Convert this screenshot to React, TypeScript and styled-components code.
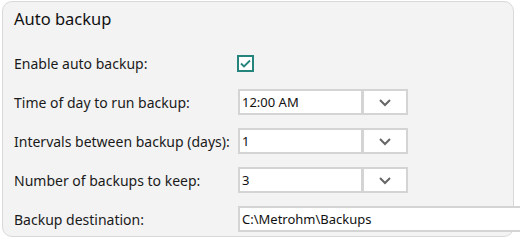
import React from "react";
import styled, { createGlobalStyle } from "styled-components";

const Global = createGlobalStyle`
  html, body { margin: 0; padding: 0; background: #ffffff; }
  body { font-family: "Noto Sans", "Open Sans", sans-serif; color: #1a1a1a; }
`;

const Card = styled.section`
  box-sizing: border-box;
  margin: 1px 0 0 2px;
  width: 512px;
  height: 236px;
  border: 1px solid #d9d9d9;
  border-radius: 10px;
  background: #f3f3f3;
  padding: 5px 0 0 11px;
`;

const Title = styled.h2`
  margin: 0;
  font-size: 16.5px;
  font-weight: 400;
  line-height: 24px;
  color: #111;
`;

const Form = styled.div`
  display: grid;
  grid-template-columns: 224px auto;
  grid-auto-rows: 26px;
  row-gap: 13px;
  margin-top: 19px;
  align-items: center;
`;

const Label = styled.label`
  font-size: 14px;
  color: #1a1a1a;
  white-space: nowrap;
`;

const Control = styled.div<{ $wide?: boolean }>`
  display: flex;
  height: 26px;
  align-items: stretch;
  margin-right: ${(p) => (p.$wide ? "-20px" : "0")};
`;

const Field = styled.div<{ $width: number }>`
  box-sizing: border-box;
  width: ${(p) => p.$width}px;
  background: #fff;
  border: 2px solid #d4d4d4;
  display: flex;
  align-items: center;
  padding-left: 2px;
  font-size: 13px;
  color: #111;
`;

const DropButton = styled.button`
  box-sizing: border-box;
  width: 46px;
  margin-left: -1px;
  background: #fff;
  border: 2px solid #d4d4d4;
  display: flex;
  align-items: center;
  justify-content: center;
  padding: 0;
`;

const CheckBox = styled.span`
  box-sizing: border-box;
  width: 17px;
  height: 17px;
  border: 2px solid #25857d;
  background: #fff;
  display: inline-flex;
  align-items: center;
  justify-content: center;
`;

const CheckCell = styled.div`
  display: flex;
  align-items: center;
  height: 26px;
  margin-left: -1px;
`;

const Chevron = () => (
  <svg width="14" height="9" viewBox="0 0 14 9">
    <path d="M2 2 L7 7 L12 2" fill="none" stroke="#666" strokeWidth="2" />
  </svg>
);

const Tick = () => (
  <svg width="11" height="9" viewBox="0 0 11 9">
    <path d="M1 4.5 L4 7.5 L10 1.5" fill="none" stroke="#25857d" strokeWidth="1.8" />
  </svg>
);

const Select = ({ value }: { value: string }) => (
  <Control>
    <Field $width={125}>{value}</Field>
    <DropButton type="button">
      <Chevron />
    </DropButton>
  </Control>
);

export default function App() {
  return (
    <>
      <Global />
      <Card>
        <Title>Auto backup</Title>
        <Form>
          <Label>Enable auto backup:</Label>
          <CheckCell>
            <CheckBox>
              <Tick />
            </CheckBox>
          </CheckCell>
          <Label>Time of day to run backup:</Label>
          <Select value="12:00 AM" />
          <Label>Intervals between backup (days):</Label>
          <Select value="1" />
          <Label>Number of backups to keep:</Label>
          <Select value="3" />
          <Label>Backup destination:</Label>
          <Control $wide>
            <Field $width={290}>C:\Metrohm\Backups</Field>
          </Control>
        </Form>
      </Card>
    </>
  );
}
